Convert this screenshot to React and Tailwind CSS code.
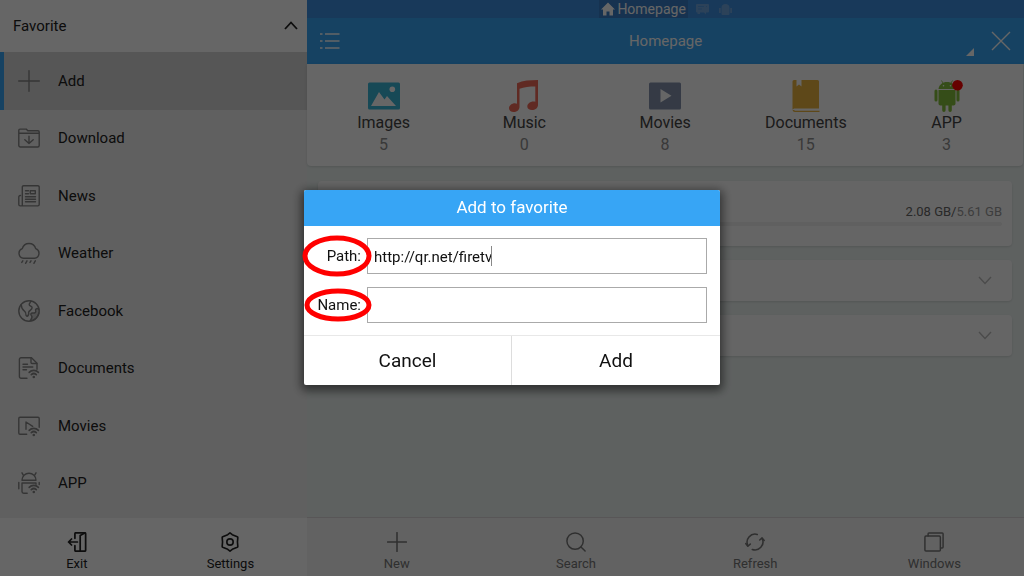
import React, { useState } from 'react';

const Stroke = ({ size = 22, width = 1.4, className = '', children }) => (
  <svg
    width={size}
    height={size}
    viewBox="0 0 22 22"
    fill="none"
    stroke="currentColor"
    strokeWidth={width}
    strokeLinecap="round"
    strokeLinejoin="round"
    className={`shrink-0 ${className}`}
    aria-hidden="true"
  >
    {children}
  </svg>
);

const Wifi = () => (
  <>
    <path d="M11.2 15.4a6.4 6.4 0 0 1 9.2 0M13.3 17.7a3.6 3.6 0 0 1 5 0" strokeWidth="1.700" />
    <circle cx="15.8" cy="20" r="1.3" fill="currentColor" stroke="none" />
  </>
);

const PlusIcon = ({ size, width }) => (
  <Stroke size={size} width={width}>
    <path d="M11 .7v20.6M.7 11h20.6" />
  </Stroke>
);

const DownloadIcon = () => (
  <Stroke>
    <path d="M.8 18.500V3.300a1.200 1.200 0 0 1 1.200-1.200h6.200l1.600 1.600H20a1.200 1.200 0 0 1 1.200 1.200v13.600a1.500 1.500 0 0 1-1.500 1.500H2.300a1.500 1.500 0 0 1-1.500-1.500zM.8 6.200h20.400M11 9.200v7.300M6.800 12.800l4.200 3.700 4.200-3.700" />
  </Stroke>
);

const NewsIcon = () => (
  <Stroke>
    <path d="M4.300 20.800V2a1.300 1.300 0 0 1 1.300-1.300h14.300A1.300 1.300 0 0 1 21.200 2v17.500a1.400 1.400 0 0 1-1.400 1.400H2.200A1.400 1.400 0 0 1 .8 19.500v-7.700a1.300 1.300 0 0 1 1.300-1.300h.4" />
    <path d="M7.500 5.700h3M7.500 8.700h3M12.300 5.700h5v3h-5zM7.500 11.700h10M7.500 14.200h10M7.500 16.700h10" />
  </Stroke>
);

const WeatherIcon = () => (
  <Stroke>
    <path d="M6 16.200H5.500A4.900 4.900 0 0 1 4.300 6.700a6.900 6.900 0 0 1 13.400 0 4.900 4.900 0 0 1-1.200 9.500z" />
    <path d="m4.800 18.800-1 1.600M9 18.800l-1.400 2.500M13 18.800l-1 1.600M17.300 18.800l-1.400 2.500" />
  </Stroke>
);

const GlobeIcon = () => (
  <Stroke>
    <circle cx="11" cy="11" r="10.200" />
    <path d="M3.200 4.500c.2 3 1 5 3 6.300 1.500 1 2 2.500 1.800 4.400l1.200 1.200c1.800-1 1.700-2.900 1.400-4.200.8-1.700 3.700-2.600 3.500-4.700-.2-1.500-3.100-1.100-2.900-3.100.1-1.300 1.600-1.800 1.500-3.500" />
    <path d="M20.800 9.300c-1.900-1.700-3.900.1-3.100 1.700.6 1.300-1 2.200-3 2-1.900-.1-2.500 1.500-1.200 2.700 1.500 1.300 0 2.800-1.300 4.900 4-.2 7.500-3.300 8.600-7.500" fill="currentColor" fillOpacity=".35" />
  </Stroke>
);

const DocumentsIcon = () => (
  <Stroke>
    <path d="M9 21.200H3A1.600 1.600 0 0 1 1.400 19.600V2.300A1.600 1.600 0 0 1 3 .7h10.500L19 6.200v6" />
    <path d="M13 .9v4.600a1 1 0 0 0 1 1h4.800M5 7.200h4.500M5 10h9.800M5 12.800h3.500" />
    <Wifi />
  </Stroke>
);

const MoviesIcon = () => (
  <Stroke>
    <path d="M8.700 19.300H2A1.200 1.200 0 0 1 .8 18.100V3.500A1.200 1.200 0 0 1 2 2.300h18a1.200 1.200 0 0 1 1.200 1.200v8.700" />
    <path d="M8 14.200V7l6.700 4.300" />
    <Wifi />
  </Stroke>
);

const AndroidLineIcon = () => (
  <Stroke>
    <path d="M4 8.300a7 7 0 0 1 14 0zM5.700 3.800 4 .8M16.300 3.800l1.700-3M.8 10.500v6.300M21.200 10.500v2M4 19.500V11h14v1.200M4 19.500c0 1 .7 1.700 1.700 1.700h3.500" />
    <Wifi />
  </Stroke>
);

const ExitIcon = () => (
  <Stroke size={20} width={1.900}>
    <path d="M8.700 7V1.900a1 1 0 0 1 1-1h9.800a1 1 0 0 1 1 1v18.200a1 1 0 0 1-1 1H9.700a1 1 0 0 1-1-1V15" />
    <path d="m19.500 1-5 2.800v17M11.500 11H1.700M5 7.700 1.700 11 5 14.300" />
  </Stroke>
);

const SettingsIcon = () => (
  <Stroke size={20} width={1.800}>
    <path d="M11 1 13.500 3l5.500 2.200a1 1 0 0 1 .6 1L19.200 11l.4 4.800a1 1 0 0 1-.6 1L13.500 19 11 21l-2.500-2L3 16.800a1 1 0 0 1-.6-1L2.800 11l-.4-4.800a1 1 0 0 1 .6-1L8.500 3z" />
    <circle cx="11" cy="11" r="3.500" />
  </Stroke>
);

const SearchIcon = () => (
  <Stroke size={20} width={1.600}>
    <circle cx="10" cy="10" r="9" />
    <path d="m16.500 16.500 4.500 4.500" />
  </Stroke>
);

const RefreshIcon = () => (
  <Stroke size={20} width={1.700}>
    <path d="M3.200 15A8.800 8.800 0 0 1 13.500 2.700M8 19.200A8.800 8.800 0 0 0 18.900 7.200" />
    <path d="m.8 12.700 2.300 3 2.700-2.400M16.200 8.800 18.800 6.500l2.300 2.800" />
  </Stroke>
);

const WindowsIcon = () => (
  <Stroke size={20} width={1.600}>
    <rect x="1" y="4.500" width="17" height="16.500" rx="1.200" />
    <path d="M4.500 4.300V2a1 1 0 0 1 1-1H20a1 1 0 0 1 1 1v14.500a1 1 0 0 1-1 1h-1.800" />
  </Stroke>
);

const ImagesIcon = () => (
  <svg width="32" height="32" viewBox="0 0 32 32">
    <rect y="2.500" width="32" height="27" rx="1.500" fill="#3ab6d8" />
    <path d="M3 26 11 12l5.500 7.500 2.500-3.500L28 26z" fill="#fff" />
    <circle cx="24.300" cy="9.200" r="2.800" fill="#fff" />
  </svg>
);

const MusicIcon = () => (
  <svg width="32" height="32" viewBox="0 0 32 32" fill="#f06a58">
    <path d="M9 3.200C15 .6 22 0 30 0v25c0 3-3 5-6 5-2.800 0-4.700-1.500-4.700-3.600 0-2.700 3-5 6-5 .8 0 1.500.2 2 .4V6.400C21.500 6.400 16 7 11.500 8.800V27c0 3-3 5-5.800 5C3 32 1 30.500 1 28.200c0-2.700 3-4.900 5.800-4.900.9 0 1.600.2 2.200.5z" />
  </svg>
);

const VideoIcon = () => (
  <svg width="32" height="32" viewBox="0 0 32 32">
    <rect y="2.500" width="32" height="27" rx="1.500" fill="#8492ad" />
    <path d="M11.500 9v13.500L22.500 15.700z" fill="#fff" />
  </svg>
);

const BookIcon = () => (
  <svg width="32" height="32" viewBox="0 0 32 32" fill="#ecb440">
    <path d="M4 0h2.500v6.500l2.500-2 2.500 2V0h16A1.500 1.500 0 0 1 29 1.500V28.500H5c-1.500 0-2.200.5-2.500 1.500V1.500A1.500 1.500 0 0 1 4 0z" />
    <path d="M2.500 30h1.500l1 .7H29.500V32H5a2.500 2.500 0 0 1-2.500-2z" />
  </svg>
);

const RobotIcon = () => (
  <svg width="32" height="32" viewBox="0 0 32 32" fill="#86c03c" className="overflow-visible">
    <path d="m10.500.5 2 3.500M21.500.5l-2 3.500" stroke="#86c03c" strokeWidth=".8" />
    <path d="M7.500 9C8 4.700 11.500 2 16 2s8 2.700 8.500 7z" />
    <rect x="3.500" y="9.500" width="3" height="12" rx="1.500" />
    <rect x="25.500" y="9.500" width="3" height="12" rx="1.500" />
    <path d="M7.500 10h17v13.500c0 1-.8 2-2 2h-1.700v4.800a1.700 1.700 0 0 1-3.400 0v-4.800h-2.800v4.800a1.700 1.700 0 0 1-3.400 0v-4.800H9.500c-1.200 0-2-1-2-2z" />
    <circle cx="12.500" cy="5.800" r=".8" fill="#fff" />
    <circle cx="19.500" cy="5.800" r=".8" fill="#fff" />
    <circle cx="26.500" cy="5.200" r="5.300" fill="#f00" />
  </svg>
);

const favorites = [
  { name: 'Add', icon: <PlusIcon /> },
  { name: 'Download', icon: <DownloadIcon /> },
  { name: 'News', icon: <NewsIcon /> },
  { name: 'Weather', icon: <WeatherIcon /> },
  { name: 'Facebook', icon: <GlobeIcon /> },
  { name: 'Documents', icon: <DocumentsIcon /> },
  { name: 'Movies', icon: <MoviesIcon /> },
  { name: 'APP', icon: <AndroidLineIcon /> },
];

const categories = [
  { name: 'Images', count: 5, icon: <ImagesIcon /> },
  { name: 'Music', count: 0, icon: <MusicIcon /> },
  { name: 'Movies', count: 8, icon: <VideoIcon /> },
  { name: 'Documents', count: 15, icon: <BookIcon /> },
  { name: 'APP', count: 3, icon: <RobotIcon /> },
];

const tools = [
  { name: 'New', icon: <PlusIcon size={20} width={1.700} /> },
  { name: 'Search', icon: <SearchIcon /> },
  { name: 'Refresh', icon: <RefreshIcon /> },
  { name: 'Windows', icon: <WindowsIcon /> },
];

const Sidebar = () => (
  <aside className="w-[30%] shrink-0 flex flex-col bg-[#f0f0f0] text-[#222]">
    <button className="h-[52px] shrink-0 flex items-center justify-between pl-[13px] pr-2 bg-white text-[15px]">
      Favorite
      <svg width="16" height="16" viewBox="0 0 16 16" fill="none" stroke="currentColor" strokeWidth="1.800">
        <path d="m2 11 6-6.500 6 6.500" />
      </svg>
    </button>
    <nav className="flex-1 min-h-0 flex flex-col pb-1.5">
      {favorites.map((item, index) => (
        <button
          key={item.name}
          className={`flex-1 flex items-center gap-[18px] pl-3.5 border-l-4 text-[15px] ${
            index === 0 ? 'bg-[#d6d6d6] border-[#37a5f5]' : 'border-transparent'
          }`}
        >
          <span className="text-[#858585]">{item.icon}</span>
          {item.name}
        </button>
      ))}
    </nav>
    <div className="h-[58px] shrink-0 grid grid-cols-2 bg-white text-[13px] leading-4">
      <button className="flex flex-col items-center justify-end gap-1 pb-1">
        <ExitIcon />
        Exit
      </button>
      <button className="flex flex-col items-center justify-end gap-1 pb-1">
        <SettingsIcon />
        Settings
      </button>
    </div>
  </aside>
);

const TabStrip = () => (
  <div className="h-[18px] flex justify-center bg-[#3c8ee0] text-white">
    <button className="flex items-center gap-0.5 px-0.5 bg-[#387ec8] text-[14px] leading-[18px]">
      <svg width="14" height="14" viewBox="0 0 14 14" fill="currentColor">
        <path d="M7 .5 0 7.500h2V13.500h3.500V9.500h3v4H12V7.500h2z" />
      </svg>
      Homepage
    </button>
    <button aria-label="Messages" className="ml-2 text-[#6fa6df]">
      <svg width="13" height="12" viewBox="0 0 13 12" fill="currentColor">
        <path d="M1 1h11a1 1 0 0 1 1 1v6.500a1 1 0 0 1-1 1h-2v2l-2-2H4v1.500H1.500V9.500H1a1 1 0 0 1-1-1V2a1 1 0 0 1 1-1z" />
        <path d="M2 3.500h6M10 3.500h1M2 6h4" stroke="#3c8ee0" strokeWidth=".6" />
      </svg>
    </button>
    <button aria-label="Apps" className="ml-2.5 text-[#6fa6df]">
      <svg width="13" height="13" viewBox="0 0 13 13" fill="currentColor">
        <path d="M2.500 4.800C2.500 2.200 4.200 1 6.500 1s4 1.200 4 3.800v6.200a1 1 0 0 1-1 1h-6a1 1 0 0 1-1-1zM0 5h1.800v5H0zM11.200 5H13v5h-1.800z" />
      </svg>
    </button>
  </div>
);

const Header = () => (
  <header className="h-[46px] grid grid-cols-[1fr_auto_1fr] items-center bg-[#37a5f5] text-white">
    <button aria-label="Menu" className="ml-[13px] w-5">
      <svg width="20" height="18" viewBox="0 0 20 18" stroke="currentColor" strokeWidth="1.500">
        <path d="M0 2h2.500M5 2h14.500M0 9h2.500M5 9h14.500M0 16h2.500M5 16h14.500" />
      </svg>
    </button>
    <h1 className="text-[15px]">Homepage</h1>
    <div className="self-stretch flex justify-end items-center gap-[17px] pr-[13px]">
      <svg width="8" height="8" viewBox="0 0 8 8" fill="currentColor" className="self-end mb-2">
        <path d="M8 0v8H0z" />
      </svg>
      <button aria-label="Close">
        <svg width="20" height="20" viewBox="0 0 20 20" stroke="currentColor" strokeWidth="1.400">
          <path d="m1 1 18 18M19 1 1 19" />
        </svg>
      </button>
    </div>
  </header>
);

const CollapsedCard = ({ label }) => (
  <button
    aria-label={label}
    className="h-[41px] flex items-center justify-end pr-5 bg-[#fdfdfd] rounded-sm shadow-sm"
  >
    <svg width="14" height="14" viewBox="0 0 14 14" fill="none" stroke="#bbb" strokeWidth="1.400">
      <path d="m1 3 6 6.500L13 3" />
    </svg>
  </button>
);

const Homepage = () => (
  <main className="flex-1 min-w-0 flex flex-col bg-[#ecf3f1]">
    <TabStrip />
    <Header />
    <section className="mr-px grid grid-cols-5 px-1.5 pt-4 pb-2.5 bg-[#fefefe] rounded-b-sm shadow-sm">
      {categories.map((item) => (
        <button key={item.name} className="flex flex-col items-center text-[16px] leading-[22px] text-[#444]">
          {item.icon}
          <span>{item.name}</span>
          <span className="text-[#8f8f8f]">{item.count}</span>
        </button>
      ))}
    </section>
    <div className="flex-1 min-h-0 flex flex-col gap-3.5 pt-[15px] pl-[11px] pr-3">
      <section className="h-[65px] flex flex-col items-end px-2.5 pt-[22px] bg-[#fdfdfd] rounded-sm shadow-sm">
        <p className="text-[13px] leading-[18px] text-[#999]">
          <span className="text-[#666]">2.08 GB/</span>5.61 GB
        </p>
        <div className="w-full h-1 mt-px rounded-full bg-[#efefef]" />
      </section>
      <CollapsedCard label="Expand first section" />
      <CollapsedCard label="Expand second section" />
    </div>
    <footer className="h-[59px] shrink-0 grid grid-cols-4 border-t border-[#dcd8d9] bg-[#f4f4f4] text-[13px] leading-4 text-[#777]">
      {tools.map((tool) => (
        <button key={tool.name} className="flex flex-col items-center justify-end gap-1 pb-1">
          {tool.icon}
          {tool.name}
        </button>
      ))}
    </footer>
  </main>
);

const Highlight = ({ cx, cy, rx, ry }) => (
  <svg
    width="70"
    height="36"
    className="absolute left-0 top-0 overflow-visible pointer-events-none"
    fill="none"
    stroke="#f00"
    strokeWidth="5"
  >
    <ellipse cx={cx} cy={cy} rx={rx} ry={ry} />
  </svg>
);

const AddFavoriteDialog = () => {
  const [path, setPath] = useState('http://qr.net/firetv');
  const [name, setName] = useState('');

  return (
    <form
      role="dialog"
      aria-labelledby="dialog-title"
      onSubmit={(e) => e.preventDefault()}
      className="w-[416px] max-w-full bg-white rounded-[2px] text-[#111] shadow-[0_3px_10px_3px_rgba(0,0,0,0.5)]"
    >
      <h2 id="dialog-title" className="h-9 flex items-center justify-center rounded-t-[2px] bg-[#37a5f5] text-[17px] text-white">
        Add to favorite
      </h2>
      <div className="flex flex-col gap-[13px] py-3 pr-[13px] text-[15px]">
        <div className="relative flex items-center gap-1.5">
          <label htmlFor="path" className="w-[57px] pt-0.5 text-right">Path:</label>
          <div className="relative flex-1">
            <input
              id="path"
              type="text"
              value={path}
              onChange={(e) => setPath(e.target.value)}
              className="block w-full h-9 px-1.5 pt-0.5 border border-[#aaa] bg-white outline-none"
            />
            <span className="absolute left-[124px] top-2 h-5 w-px bg-[#888]" />
          </div>
          <Highlight cx="33" cy="18" rx="32" ry="18" />
        </div>
        <div className="relative flex items-center gap-1.5">
          <label htmlFor="name" className="w-[57px] pt-0.5 text-right">Name:</label>
          <input
            id="name"
            type="text"
            value={name}
            onChange={(e) => setName(e.target.value)}
            className="flex-1 min-w-0 h-9 px-1.5 pt-0.5 border border-[#aaa] bg-white outline-none"
          />
          <Highlight cx="34" cy="18" rx="31" ry="14" />
        </div>
      </div>
      <div className="grid grid-cols-2 divide-x divide-[#ddd] border-t border-[#e8e8e8] text-[19px]">
        <button type="button" className="h-[49px] pt-0.5">Cancel</button>
        <button type="submit" className="h-[49px] pt-0.5">Add</button>
      </div>
    </form>
  );
};

export default function App() {
  return (
    <div className="h-screen flex overflow-hidden font-[Roboto,sans-serif]">
      <Sidebar />
      <Homepage />
      <div className="fixed inset-0 flex items-center justify-center pb-0.5 bg-black/60">
        <AddFavoriteDialog />
      </div>
    </div>
  );
}
